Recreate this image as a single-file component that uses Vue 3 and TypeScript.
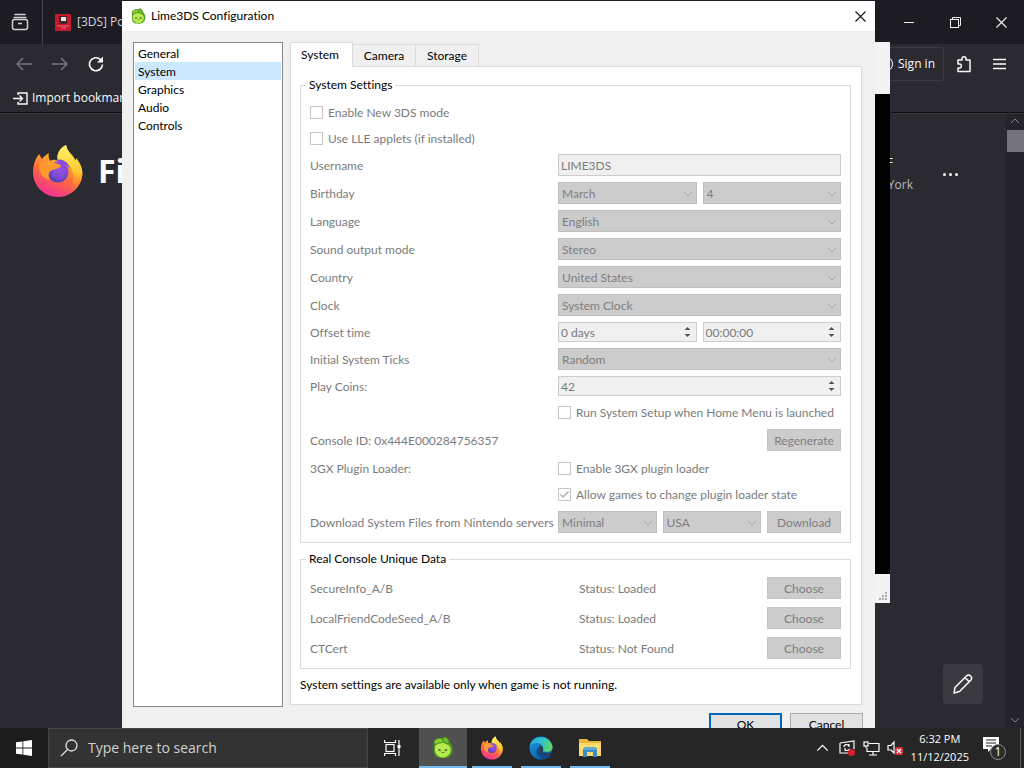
<script setup lang="ts">
import { ref } from 'vue'

interface Choice {
  id: string
  label: string
  value: string
}

const sections = ['General', 'System', 'Graphics', 'Audio', 'Controls']
const activeSection = ref('System')

const tabs = ['System', 'Camera', 'Storage']
const activeTab = ref('System')

const choices: Choice[] = [
  { id: 'language', label: 'Language', value: 'English' },
  { id: 'sound', label: 'Sound output mode', value: 'Stereo' },
  { id: 'country', label: 'Country', value: 'United States' },
  { id: 'clock', label: 'Clock', value: 'System Clock' },
]

const consoleFiles = [
  { name: 'SecureInfo_A/B', status: 'Status: Loaded' },
  { name: 'LocalFriendCodeSeed_A/B', status: 'Status: Loaded' },
  { name: 'CTCert', status: 'Status: Not Found' },
]
</script>

<template>
  <div class="desktop">
    <svg class="defs" width="0" height="0" aria-hidden="true">
      <defs>
        <linearGradient id="ffBody" x1="0.75" y1="0" x2="0.35" y2="1">
          <stop offset="0" stop-color="#fff44f" />
          <stop offset="0.3" stop-color="#ffb02e" />
          <stop offset="0.6" stop-color="#ff6a3a" />
          <stop offset="1" stop-color="#f0309a" />
        </linearGradient>
        <linearGradient id="ffRight" x1="0.5" y1="0" x2="0.5" y2="1">
          <stop offset="0" stop-color="#fff36b" />
          <stop offset="0.55" stop-color="#ffc72c" />
          <stop offset="1" stop-color="#ff7139" stop-opacity="0" />
        </linearGradient>
        <radialGradient id="ffCore" cx="0.6" cy="0.35" r="0.7">
          <stop offset="0" stop-color="#9b52e0" />
          <stop offset="0.6" stop-color="#7a4bd6" />
          <stop offset="1" stop-color="#4a3aa8" />
        </radialGradient>
        <linearGradient id="edgeTop" x1="0" y1="0.3" x2="1" y2="0.5">
          <stop offset="0" stop-color="#2aa5e0" />
          <stop offset="0.55" stop-color="#35c3c8" />
          <stop offset="1" stop-color="#63d957" />
        </linearGradient>
        <linearGradient id="edgeBase" x1="0" y1="0" x2="0.7" y2="1">
          <stop offset="0" stop-color="#1b9de2" />
          <stop offset="1" stop-color="#0c59a4" />
        </linearGradient>
        <symbol id="firefox" viewBox="0 0 52 54">
          <path fill="url(#ffBody)" d="M7 10 C8 12 9 13 10 15 C12 12 14 11 17 9 C16 12 17 14 18 17 C21 15 24 16 26 17 C24 10 28 4 34 1 C35 6 38 9 41 12 C42 14 43 16 44 17 L44 14 C50 21 52 29 49 37 C45 47 36 53 26 53 C12 53 1 42 1 28 C1 21 3 15 7 10Z" />
          <path fill="url(#ffRight)" d="M26 17 C24 10 28 4 34 1 C35 7 39 10 42 14 L44 17 L44 14 C50 21 52 29 49 37 C46 44 41 48 35 50 C43 42 43 30 38 22 C35 18 30 17 26 17Z" />
          <circle cx="26" cy="28" r="10.500" fill="url(#ffCore)" />
          <path fill="#ff9a2e" d="M8 20 C12 16 19 15 23 19 C26 20 28 20 29 22 C27 25 23 25 20 26 C16 28 16 32 18 36 C10 34 6 28 8 20Z" />
          <path fill="#8a4bdc" d="M24 16 C31 14 37 19 38 25 C35 21 32 19 29 19Z" />
        </symbol>
        <symbol id="lime" viewBox="0 0 24 24">
          <path d="M4 5 C8 1 14 1 17 5 C21 8 23 12 21 17 C19 22 14 23 10 22 C5 22 2 18 3 13 C3 10 2 7 4 5Z" fill="#4e9b22" />
          <path d="M5 9 C9 5 16 6 19 11 C21 16 18 21 12 21.500 C7 21.500 3.500 17 4 13 C4 11 4 10 5 9Z" fill="#b7ea4f" />
          <path d="M3 7 C3 3 8 1 13 3 C15 5 12 7 8 7 C6 8 4 9 3 7Z" fill="#86cf32" stroke="#3d7a1d" stroke-width="0.800" />
          <path d="M11 3 C13 0 16 1 17 3 C19 5 18 7 17 8 C14 8 12 6 11 3Z" fill="#6fb92c" stroke="#3d7a1d" stroke-width="0.800" />
          <ellipse cx="8.500" cy="14" rx="1.300" ry="0.800" fill="#253b12" />
          <ellipse cx="15" cy="14" rx="1.300" ry="0.800" fill="#253b12" />
          <path d="M10.500 16 Q12 17.500 13.500 16" fill="none" stroke="#3b641b" stroke-width="0.800" />
        </symbol>
        <symbol id="chevron" viewBox="0 0 10 6">
          <path d="M1 1 L5 5 L9 1" fill="none" stroke="currentColor" stroke-width="1" />
        </symbol>
      </defs>
    </svg>

    <main class="browser">
      <header class="tabstrip">
        <button class="view" aria-label="Recent browsing">
          <svg width="18" height="18" viewBox="0 0 18 18" fill="none" stroke="#d0d0d6" stroke-width="1.500">
            <path d="M3.500 1.500H14.500M2.500 4.500H15.500" />
            <rect x="1.500" y="6.500" width="15" height="10" rx="2" />
            <path d="M7 10.500H11" />
          </svg>
        </button>
        <div class="page-tab">
          <svg width="16" height="17" viewBox="0 0 16 17">
            <rect width="16" height="17" rx="1" fill="#c51a30" />
            <rect x="4" y="2" width="8" height="8" fill="#50202b" />
            <rect x="6" y="3" width="5" height="4" fill="#dff0dc" />
            <path d="M2 12H14M6 14H11" stroke="#e8667a" />
          </svg>
          <span>[3DS] Pokemon</span>
        </div>
        <div class="win-buttons">
          <button aria-label="Minimize"><svg width="10" height="10" viewBox="0 0 10 10"><path d="M0 5.500H10" stroke="#eee" /></svg></button>
          <button aria-label="Restore"><svg width="11" height="11" viewBox="0 0 11 11" fill="none" stroke="#eee"><rect x="0.500" y="2.500" width="8" height="8" /><path d="M2.500 2.500V0.500H10.500V8.500H8.500" /></svg></button>
          <button aria-label="Close browser"><svg width="11" height="11" viewBox="0 0 11 11"><path d="M0.500 0.500L10.500 10.500M10.500 0.500L0.500 10.500" stroke="#eee" stroke-width="1.200" /></svg></button>
        </div>
      </header>
      <div class="toolbar">
        <button class="tool" aria-label="Back"><svg width="16" height="14" viewBox="0 0 16 14" fill="none" stroke="#777680" stroke-width="1.500"><path d="M16 7H1.500M7 1L1 7L7 13" /></svg></button>
        <button class="tool" aria-label="Forward"><svg width="16" height="14" viewBox="0 0 16 14" fill="none" stroke="#777680" stroke-width="1.500"><path d="M0 7H14.500M9 1L15 7L9 13" /></svg></button>
        <button class="tool" aria-label="Reload"><svg width="16" height="16" viewBox="0 0 16 16" fill="none" stroke="#fbfbfe" stroke-width="1.600"><path d="M14.500 8.500A6.500 6.500 0 1 1 12.500 3.500" /><path d="M15 0.500V6.500H9Z" fill="#fbfbfe" stroke="none" /></svg></button>
        <button class="signin"><span class="avatar"></span>Sign in</button>
        <button class="tool" aria-label="Extensions"><svg width="16" height="18" viewBox="0 0 16 18" fill="none" stroke="#fbfbfe" stroke-width="1.500" stroke-linejoin="round"><path d="M2 5H6V3.500C6 1 10 1 10 3.500V5H14V16.500H2V13H3.500C6 13 6 9 3.500 9H2Z" /></svg></button>
        <button class="tool" aria-label="Menu"><svg width="14" height="12" viewBox="0 0 14 12"><path d="M0 1.500H13M0 6H13M0 10.500H13" stroke="#fbfbfe" stroke-width="1.500" /></svg></button>
      </div>
      <div class="bookmarks">
        <a href="#import">
          <svg width="15" height="13" viewBox="0 0 15 13" fill="none" stroke="#fbfbfe" stroke-width="1.400"><path d="M5 3V1H14V12H5V10M0 6.500H9.500M6.500 3.500L9.500 6.500L6.500 9.500" /></svg>
          <span>Import bookmarks...</span>
        </a>
      </div>
      <section class="page">
        <div class="brand">
          <svg width="52" height="54"><use href="#firefox" /></svg>
          <h1>Firefox</h1>
        </div>
        <div class="weather">
          <p class="place"><span>46°F</span><span>New York</span></p>
          <button class="more" aria-label="Weather options"><i></i><i></i><i></i></button>
        </div>
        <button class="edit" aria-label="Customize">
          <svg width="20" height="20" viewBox="0 0 20 20" fill="none" stroke="#fbfbfe" stroke-width="1.500" stroke-linejoin="round"><path d="M1 19L2 13.500L13.500 2C15 0.500 16.500 0.800 17.500 2C18.800 3 19 4.500 18 6L6.500 17.500ZM12 3.500L16.500 8" /></svg>
        </button>
        <div class="scroll">
          <svg class="up" width="10" height="6"><use href="#chevron" /></svg>
          <div class="thumb"></div>
          <svg width="10" height="6"><use href="#chevron" /></svg>
        </div>
      </section>

      <div class="game"><div class="screen"></div><div class="status"><svg width="9" height="9" viewBox="0 0 9 9" fill="#aaa"><path d="M6 0h2v2h-2zM3 3h2v2h-2zM6 3h2v2h-2zM0 6h2v2h-2zM3 6h2v2h-2zM6 6h2v2h-2z" /></svg></div></div>

      <div class="dialog" role="dialog" aria-labelledby="dialog-title">
        <header class="title">
          <svg width="17" height="17"><use href="#lime" /></svg>
          <span id="dialog-title">Lime3DS Configuration</span>
          <button aria-label="Close"><svg width="11" height="11" viewBox="0 0 11 11"><path d="M0.500 0.500L10.500 10.500M10.500 0.500L0.500 10.500" stroke="#111" stroke-width="1.100" /></svg></button>
        </header>
        <div class="body">
          <nav class="sections">
            <button v-for="s in sections" :key="s" :class="{ active: s === activeSection }" @click="activeSection = s">{{ s }}</button>
          </nav>
          <div class="config">
            <div class="tabs" role="tablist">
              <button v-for="t in tabs" :key="t" role="tab" :aria-selected="t === activeTab" :class="{ active: t === activeTab }" @click="activeTab = t">{{ t }}</button>
            </div>
            <div class="pane">
              <fieldset>
                <legend>System Settings</legend>
                <div class="form">
                  <label class="check wide"><input type="checkbox" disabled /><span>Enable New 3DS mode</span></label>
                  <label class="check wide"><input type="checkbox" disabled /><span>Use LLE applets (if installed)</span></label>

                  <label class="name" for="username">Username</label>
                  <input id="username" class="text" type="text" value="LIME3DS" disabled />

                  <label class="name" for="month">Birthday</label>
                  <div class="pair">
                    <div class="combo"><select id="month" disabled><option>March</option></select><svg width="10" height="6"><use href="#chevron" /></svg></div>
                    <div class="combo"><select aria-label="Day" disabled><option>4</option></select><svg width="10" height="6"><use href="#chevron" /></svg></div>
                  </div>

                  <template v-for="c in choices" :key="c.id">
                    <label class="name" :for="c.id">{{ c.label }}</label>
                    <div class="combo"><select :id="c.id" disabled><option>{{ c.value }}</option></select><svg width="10" height="6"><use href="#chevron" /></svg></div>
                  </template>

                  <label class="name" for="days">Offset time</label>
                  <div class="pair">
                    <div class="spin">
                      <input id="days" type="text" value="0 days" disabled />
                      <svg width="7" height="12" viewBox="0 0 7 12" fill="#555"><path d="M3.500 1L6.500 4H0.500ZM3.500 11L6.500 8H0.500Z" /></svg>
                    </div>
                    <div class="spin">
                      <input aria-label="Offset hours" type="text" value="00:00:00" disabled />
                      <svg width="7" height="12" viewBox="0 0 7 12" fill="#555"><path d="M3.500 1L6.500 4H0.500ZM3.500 11L6.500 8H0.500Z" /></svg>
                    </div>
                  </div>

                  <label class="name" for="ticks">Initial System Ticks</label>
                  <div class="combo"><select id="ticks" disabled><option>Random</option></select><svg width="10" height="6"><use href="#chevron" /></svg></div>

                  <label class="name" for="coins">Play Coins:</label>
                  <div class="spin">
                    <input id="coins" type="text" value="42" disabled />
                    <svg width="7" height="12" viewBox="0 0 7 12" fill="#555"><path d="M3.500 1L6.500 4H0.500ZM3.500 11L6.500 8H0.500Z" /></svg>
                  </div>

                  <label class="check field"><input type="checkbox" disabled /><span>Run System Setup when Home Menu is launched</span></label>

                  <span class="name">Console ID: 0x444E000284756357</span>
                  <div class="actions"><button class="push" disabled>Regenerate</button></div>

                  <span class="name">3GX Plugin Loader:</span>
                  <label class="check"><input type="checkbox" disabled /><span>Enable 3GX plugin loader</span></label>
                  <label class="check field">
                    <input type="checkbox" checked disabled />
                    <svg class="tick" width="13" height="13" viewBox="0 0 13 13"><path d="M2.500 6.500L5 9L10.500 3.500" fill="none" stroke="#b0b0b0" stroke-width="1.500" /></svg>
                    <span>Allow games to change plugin loader state</span>
                  </label>

                  <label class="name" for="files">Download System Files from Nintendo servers</label>
                  <div class="actions">
                    <div class="combo"><select id="files" disabled><option>Minimal</option></select><svg width="10" height="6"><use href="#chevron" /></svg></div>
                    <div class="combo"><select aria-label="Region" disabled><option>USA</option></select><svg width="10" height="6"><use href="#chevron" /></svg></div>
                    <button class="push" disabled>Download</button>
                  </div>
                </div>
              </fieldset>

              <fieldset>
                <legend>Real Console Unique Data</legend>
                <div class="files">
                  <template v-for="f in consoleFiles" :key="f.name">
                    <span class="name">{{ f.name }}</span><span class="name">{{ f.status }}</span>
                    <button class="push" disabled>Choose</button>
                  </template>
                </div>
              </fieldset>
              <p class="note">System settings are available only when game is not running.</p>
            </div>
          </div>
        </div>
        <footer class="buttons">
          <button class="ok">OK</button>
          <button>Cancel</button>
        </footer>
      </div>
    </main>

    <footer class="taskbar">
      <button class="start" aria-label="Start">
        <svg width="16" height="16" viewBox="0 0 16 16" fill="#fff"><path d="M0 2.300L6.500 1.400V7.600H0ZM7.300 1.300L16 0V7.600H7.300ZM0 8.400H6.500V14.600L0 13.700ZM7.300 8.400H16V16L7.300 14.700Z" /></svg>
      </button>
      <label class="search">
        <svg width="18" height="18" viewBox="0 0 18 18" fill="none" stroke="#e0e0e0" stroke-width="1.300"><circle cx="11.500" cy="6.500" r="5.500" /><path d="M7.500 10.500L1 17" /></svg>
        <input type="text" placeholder="Type here to search" aria-label="Search" />
      </label>
      <button class="taskview" aria-label="Task view">
        <svg width="17" height="16" viewBox="0 0 17 16" fill="none" stroke="#fff" stroke-width="1.200"><path d="M0.500 0V2.500H11.500V0M0.500 16V13.500H11.500V16" /><rect x="2" y="4.500" width="8" height="7" /><path d="M15 0V16" /><rect x="13.500" y="5" width="3" height="3" fill="#fff" stroke="none" /></svg>
      </button>
      <div class="apps">
        <button class="current" aria-label="Lime3DS"><svg width="24" height="24"><use href="#lime" /></svg></button>
        <button aria-label="Firefox"><svg width="24" height="24"><use href="#firefox" /></svg></button>
        <button aria-label="Edge">
          <svg width="24" height="24" viewBox="0 0 24 24"><circle cx="12" cy="12" r="11.500" fill="url(#edgeBase)" /><path fill="url(#edgeTop)" d="M1 9C4 -1 20 -2 23.500 10C24 15 20 17 15 15.500C13.500 15 14 14 14.500 12.500C14 7 7 5 1 9Z" /><path d="M9 11C5 16 9 23 15 23C19 22 21 20 22 18C17 21 10 19 9 11Z" fill="#10498c" /><path d="M14 15C12 16 16 18 21 17C23 16 22.500 17.500 22 18C17 21 10 18 9.500 12C10 8 15 10 14 15Z" fill="#2d2d2d" opacity="0.750" /></svg>
        </button>
        <button aria-label="File Explorer">
          <svg width="22" height="20" viewBox="0 0 22 20"><path d="M0 1H8L10 3H22V18H0Z" fill="#e9b53c" /><path d="M0 5H22V18H0Z" fill="#ffd96b" /><path d="M4 11L6 9H16L18 11V19H14V14H8V19H4Z" fill="#3c8dc4" /><path d="M6 9H16L18 12H4Z" fill="#5aa9d8" /></svg>
        </button>
      </div>
      <div class="tray">
        <button aria-label="Show hidden icons"><svg class="up" width="13" height="8"><use href="#chevron" /></svg></button>
        <svg width="17" height="16" viewBox="0 0 17 16" fill="none" stroke="#fff" stroke-width="1.200"><path d="M1 3L15 1V9M1 3V13H9M5 7C5 4 9 4 10 6M10 4V7M11 9C9 11 6 11 6 9M6 11V8" /><circle cx="12.500" cy="12.500" r="3.500" fill="#d8202a" stroke="none" /></svg>
        <svg width="17" height="15" viewBox="0 0 17 15" fill="none" stroke="#fff" stroke-width="1.200"><path d="M6 2.500H16V10.500H4V7M10 10.500V14M6 14H14" /><rect x="1" y="1" width="4" height="4" /><path d="M3 5V7" /></svg>
        <svg width="17" height="16" viewBox="0 0 17 16"><path d="M1 5.500H4L7 2V13L4 10H1Z" fill="none" stroke="#fff" stroke-width="1.200" /><rect x="8" y="7" width="8" height="8" rx="2" fill="#d8303c" /><path d="M10 9L14 13M14 9L10 13" stroke="#fff" stroke-width="1.300" /></svg>
        <p class="clock"><span>6:32 PM</span><span>11/12/2025</span></p>
        <button aria-label="Notifications, 1 new">
          <svg width="26" height="26" viewBox="0 0 26 26"><path d="M1 2H17V14H9L6 17V14H1Z" fill="#fff" /><path d="M4 5H14M4 8H14M4 11H10" stroke="#222" stroke-width="1.200" /><circle cx="16" cy="17" r="7.500" fill="#2c2c2c" stroke="#8c8c8c" /><text x="16" y="21" text-anchor="middle" font-size="12" fill="#fff">1</text></svg>
        </button>
      </div>
      <button class="peek" aria-label="Show desktop"></button>
    </footer>
  </div>
</template>

<style>
body { overflow: hidden; background: #2b2a33; }
</style>

<style scoped>
* { box-sizing: border-box; }
.desktop { display: flex; flex-direction: column; height: 100vh; overflow: hidden; font: 12px/18px "Open Sans", "Noto Sans", sans-serif; color: #000; }
.defs { position: absolute; }
button, input, select { font: inherit; color: inherit; margin: 0; }
button { border: 0; background: none; padding: 0; }
svg { flex: none; display: block; }
p, h1 { margin: 0; }

.browser { flex: 1; min-height: 0; position: relative; overflow: hidden; display: flex; flex-direction: column; background: #2b2a30; color: #fbfbfe; }
.tabstrip { display: flex; align-items: center; height: 44px; background: #1d1c22; }
.view { width: 43px; height: 44px; padding-left: 11px; border-right: 1px solid #45444c; }
.page-tab { display: flex; align-items: center; gap: 6px; padding-left: 12px; color: #d6d6dc; }
.win-buttons { display: flex; margin-left: auto; }
.win-buttons button { width: 46px; height: 44px; display: grid; place-items: center; }
.toolbar { display: flex; align-items: center; height: 40px; padding: 0 6px; background: #2b2a31; }
.tool { width: 36px; height: 32px; display: grid; place-items: center; }
.signin { display: flex; align-items: center; gap: 5px; height: 34px; margin-left: auto; margin-right: 2px; padding: 0 8px; border: 1px solid #3b3a42; border-radius: 3px; }
.avatar { width: 16px; height: 16px; border: 1px solid #fbfbfe; border-radius: 50%; }
.bookmarks { height: 29px; padding: 0 13px; border-bottom: 1px solid #111015; background: #2b2a31; display: flex; align-items: center; }
.bookmarks a { display: flex; align-items: center; gap: 4px; color: inherit; text-decoration: none; }
.page { flex: 1; position: relative; display: flex; justify-content: space-between; align-items: flex-start; border-top: 1px solid #37363d; padding: 30px 66px 0 32px; }
.brand { display: flex; align-items: center; gap: 14px; }
h1 { font-size: 32px; line-height: 54px; font-weight: 700; }
.weather { display: flex; align-items: center; gap: 30px; padding-top: 8px; }
.place { display: flex; flex-direction: column; align-items: flex-start; line-height: 22px; color: #b9b9bf; }
.place span:first-child { padding-left: 8px; color: #fbfbfe; }
.more { display: flex; gap: 3px; }
.more i { width: 3px; height: 3px; border-radius: 50%; background: #fbfbfe; }
.edit { position: absolute; right: 41px; bottom: 24px; width: 40px; height: 40px; display: grid; place-items: center; background: #3b3a41; border-radius: 4px; }
.scroll { position: absolute; top: 0; right: 0; bottom: 0; width: 18px; display: flex; flex-direction: column; align-items: center; padding: 4px 0 5px; background: #25242a; color: #85848c; }
.up { transform: rotate(180deg); }
.thumb { width: 17px; height: 22px; margin: 6px 0 auto 1px; background: #75747a; }

.game { position: absolute; right: 134px; top: 42px; width: 640px; height: 561px; padding-top: 52px; display: flex; flex-direction: column; background: #f3f3f3; }
.screen { flex: 1; background: #000; }
.status { height: 29px; display: flex; justify-content: flex-end; align-items: flex-end; padding: 2px; }

.dialog { position: absolute; left: 122px; right: 149px; top: 1px; background: #f0f0f0; color: #000; display: flex; flex-direction: column; font-family: Lato, "Open Sans", sans-serif; font-variant-ligatures: none; }
.dialog input, .dialog select, .dialog button { font-variant-ligatures: none; }
.title { display: flex; align-items: center; height: 30px; gap: 4px; padding: 0 9px 0 8px; background: #fff; }
.title button { margin-left: auto; }
.body { display: flex; align-items: stretch; gap: 7px; padding: 11px 13px 0 11px; }
.sections { width: 150px; display: flex; flex-direction: column; padding: 1px; background: #fff; border: 1px solid #828790; margin-bottom: -2px; }
.sections button { height: 18px; line-height: 19px; padding: 0 3px; text-align: left; }
.sections button.active { background: #cce8ff; }
.config { flex: 1; min-width: 0; }
.tabs { display: flex; align-items: flex-end; height: 24px; }
.tabs button { height: 22px; min-width: 63px; border: 1px solid #dcdcdc; border-left: 0; border-bottom: 0; }
.tabs button.active { height: 25px; margin-bottom: -1px; padding-right: 3px; border-left: 1px solid #dcdcdc; background: #fff; position: relative; }
.pane { border: 1px solid #dcdcdc; background: #fff; padding: 9px 10px 10px 9px; }
fieldset { min-width: 0; margin: 0 0 7px; padding: 0 9px 8px; border: 1px solid #dcdcdc; }
legend { margin-left: -4px; padding: 0 3px; line-height: 18px; }
.form, .files { color: #7b7b7b; display: grid; align-items: center; gap: 6px; line-height: 18px; white-space: nowrap; }
.form { grid-template-columns: 242px minmax(0, 1fr); padding-top: 8px; }
.name, .check span { padding-top: 2px; }
.wide { grid-column: 1 / -1; }
.field { grid-column: 2; }
.check { position: relative; display: flex; align-items: center; gap: 5px; height: 20px; }
.check input { flex: none; appearance: none; width: 13px; height: 13px; border: 1px solid #c6c6c6; background: #fff; }
.check .tick { position: absolute; left: 0; }
.text, .spin { width: 100%; border: 1px solid #ccc; background: #f0f0f0; color: #7b7b7b; }
.text { height: 22px; padding: 0 2px; }
.pair { display: grid; grid-template-columns: repeat(2, minmax(0, 1fr)); gap: 6px; }
.combo { position: relative; flex: 1; min-width: 0; height: 22px; color: #7e7e7e; }
.combo select { appearance: none; display: block; width: 100%; height: 22px; padding: 2px 3px 0; border: 1px solid #bfbfbf; border-radius: 0; background: #ccc; opacity: 1; }
.combo svg { position: absolute; right: 4px; top: 9px; color: #a8a8a8; pointer-events: none; }
.spin { display: flex; align-items: center; height: 20px; padding-right: 5px; }
.spin input { flex: 1; min-width: 0; height: 18px; padding: 2px 2px 0; border: 0; background: none; }
.actions { display: flex; justify-content: flex-end; align-items: center; gap: 6px; height: 24px; }
.push { width: 74px; height: 22px; padding-top: 1px; border: 1px solid #c4c4c4; background: #ccc; color: #7e7e7e; line-height: 20px; }
.files { grid-template-columns: minmax(0, 263fr) minmax(0, 182fr) 74px; grid-auto-rows: 24px; padding-top: 8px; }
.note { line-height: 18px; }
.buttons { display: flex; justify-content: flex-end; gap: 8px; padding: 8px 12px 10px; }
.buttons button { width: 73px; height: 24px; border: 1px solid #adadad; background: #e1e1e1; }
.buttons .ok { border: 2px solid #0067b8; }

.taskbar { flex: none; display: flex; height: 40px; background: #262626; color: #fff; }
.start { width: 48px; display: grid; place-items: center; background: #1c1c1c; }
.search { width: 320px; display: flex; align-items: center; gap: 10px; padding: 0 12px 0 11px; background: #333; border: 1px solid #464646; }
.search input { flex: 1; min-width: 0; border: 0; padding: 0; background: none; font-size: 14px; outline: none; }
.search input::placeholder { color: #d0d0d0; opacity: 1; }
.taskview { width: 48px; display: grid; place-items: center; }
.apps { display: flex; gap: 1px; padding-left: 3px; }
.apps button { position: relative; width: 48px; display: grid; place-items: center; }
.apps button::after { content: ""; position: absolute; left: 4px; right: 4px; bottom: 0; height: 2px; background: #76b9ed; }
.apps .current { background: #505050; }
.apps .current::after { left: 0; right: 0; }
.tray { display: flex; align-items: center; gap: 7px; margin-left: auto; margin-right: 12px; }
.tray button:first-child { margin-right: 3px; }
.clock { display: flex; flex-direction: column; align-items: center; font-size: 11px; line-height: 18px; }
.tray .clock + button { margin-left: 6px; }
.peek { width: 4px; border-left: 1px solid #5a5a5a; }
</style>
